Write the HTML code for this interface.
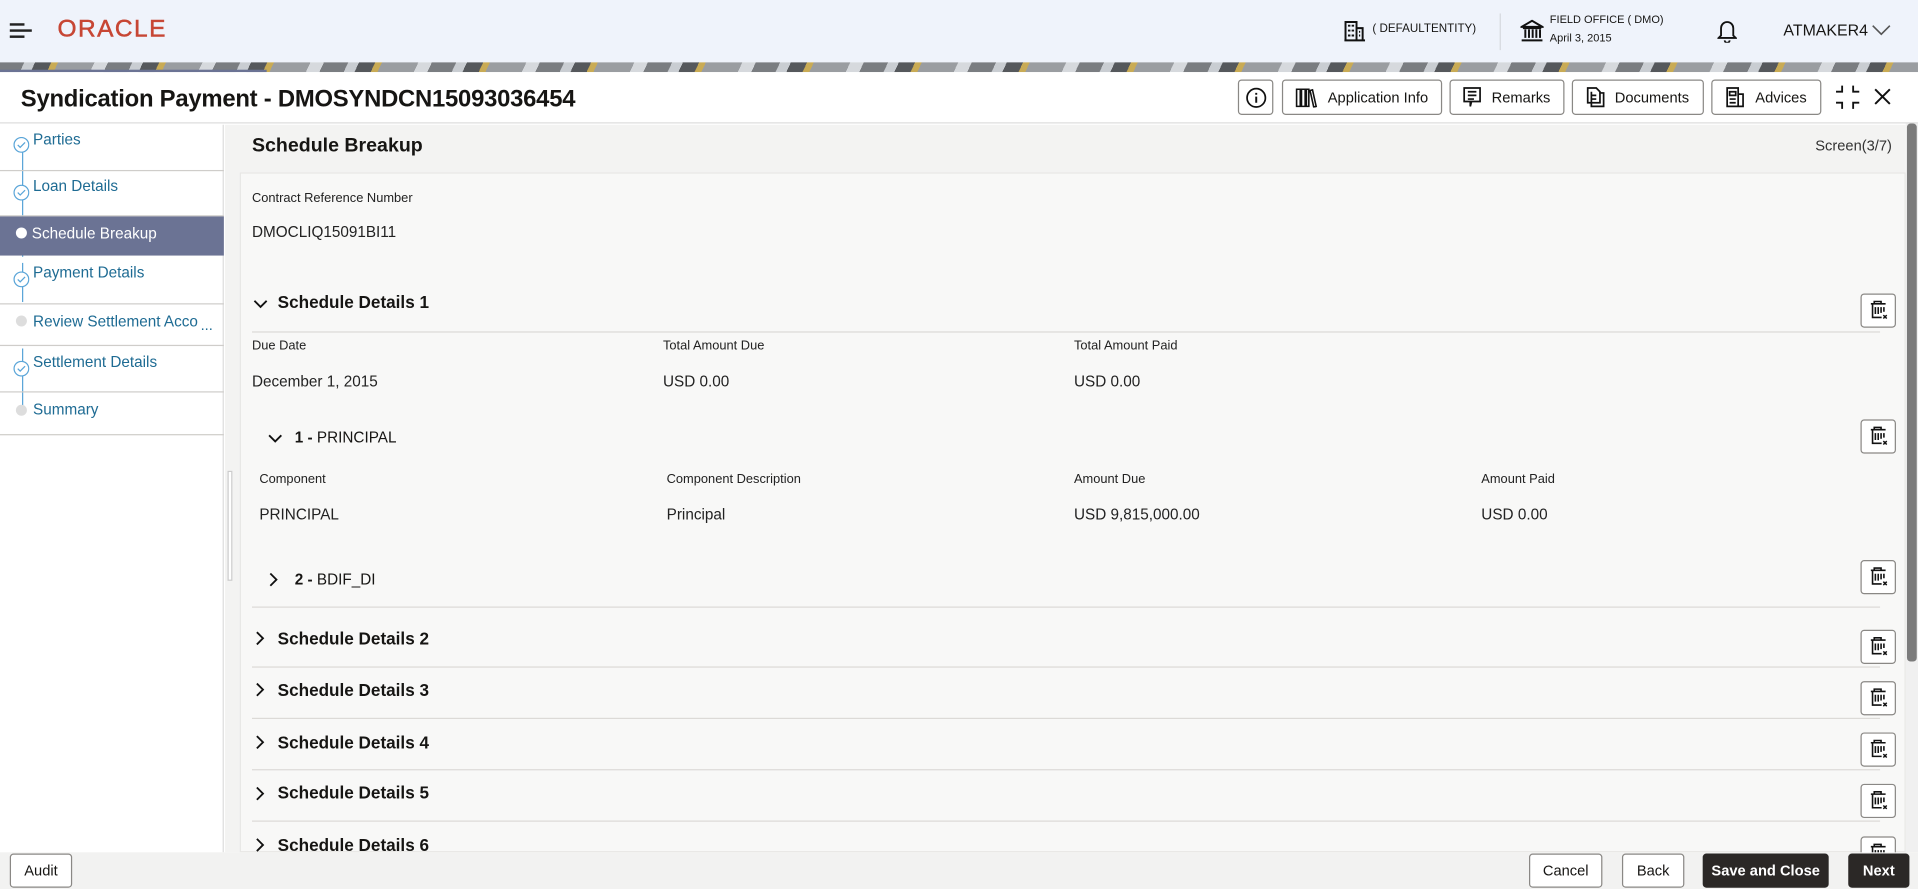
<!DOCTYPE html>
<html><head><meta charset="utf-8"><style>
*{box-sizing:border-box;margin:0;padding:0}
html,body{width:1918px;height:889px;overflow:hidden;background:#fff}
#s{position:absolute;left:0;top:0;width:1568px;height:727px;transform:scale(1.2232,1.2228);transform-origin:0 0;font-family:"Liberation Sans",sans-serif;color:#161513;overflow:hidden}
.a{position:absolute;white-space:nowrap}
.btn{position:absolute;border:1px solid #8a8885;border-radius:3px;background:#fff;font-size:12px;display:flex;align-items:center;justify-content:center;gap:8px}
.tr{position:absolute;left:1521px;width:29px;height:28px;border:1px solid #8a8885;border-radius:3px;background:#fff}
.lab{font-size:10.5px;color:#222}
.val{font-size:12.5px;color:#222}
.hd{font-size:14px;font-weight:bold;color:#161513}
.ln{position:absolute;left:206px;width:1331px;height:1px;background:#dcdad7}
.side{position:absolute;left:0;width:183px;border-bottom:1px solid #cfcdca}
.st{position:absolute;left:27px;font-size:12.5px;color:#1e6b93}
.ck{position:absolute;left:11px;width:13px;height:13px}
.dot{position:absolute;left:13px;width:9px;height:9px;border-radius:50%;background:#ddd}
.vl{position:absolute;left:18px;width:1px;background:#5aa5d8}
</style></head><body><div id="s">
<svg width="0" height="0" style="position:absolute"><defs>
<symbol id="t" viewBox="0 0 29 28"><path d="M11 8V6h6v2M8 8h13M9.5 8v12h8M12 11v6M14.5 11v6M17 11v5M19.5 11v4" stroke="#111" stroke-width="1.4" fill="none"/><path d="M19 18l3 3M22 18l-3 3" stroke="#111" stroke-width="1.3"/></symbol>
<symbol id="c" viewBox="0 0 13 13"><circle cx="6.5" cy="6.5" r="6" fill="#fff" stroke="#5aa5d8" stroke-width="1"/><path d="M3.5 6.5l2 2 4-4" stroke="#5aa5d8" stroke-width="1" fill="none"/></symbol>
</defs></svg>
<!-- top bar -->
<div class="a" style="left:0;top:0;width:1568px;height:51px;background:#eff3fb"></div>
<div class="a" style="left:8px;top:19px;width:12px;height:2px;background:#222"></div>
<div class="a" style="left:8px;top:24px;width:18px;height:2px;background:#222"></div>
<div class="a" style="left:8px;top:29px;width:12px;height:2px;background:#222"></div>
<div class="a" style="left:47px;top:13px;font-size:20px;color:#c74634;letter-spacing:1.2px;-webkit-text-stroke:0.4px #c74634">ORACLE</div>
<svg class="a" style="left:1099px;top:16px" width="17" height="18" viewBox="0 0 17 18"><path d="M1 17V2h9v15M10 7h5v10M0 17h17M3 5h2M6 5h2M3 9h2M6 9h2M3 13h2M6 13h2M12 10h1M12 13h1" stroke="#111" stroke-width="1.6" fill="none"/></svg>
<div class="a" style="left:1122px;top:18px;font-size:9.5px">( DEFAULTENTITY)</div>
<div class="a" style="left:1226px;top:11px;width:1px;height:30px;background:#d6d8de"></div>
<svg class="a" style="left:1243px;top:16px" width="19" height="18" viewBox="0 0 19 18"><path d="M1 6L9.5 1 18 6zM2 7h15M4 8v7M7 8v7M10 8v7M13 8v7M16 8v7M1 17h17" stroke="#111" stroke-width="1.6" fill="none"/></svg>
<div class="a" style="left:1267px;top:11px;font-size:9px">FIELD OFFICE ( DMO)</div>
<div class="a" style="left:1267px;top:26px;font-size:9px">April 3, 2015</div>
<svg class="a" style="left:1404px;top:15px" width="16" height="20" viewBox="0 0 16 20"><path d="M3 14V8a5 5 0 0110 0v6l2 2H1zM6 18a2 2 0 004 0" stroke="#111" stroke-width="1.5" fill="none"/></svg>
<div class="a" style="left:1458px;top:17px;font-size:13px">ATMAKER4</div>
<svg class="a" style="left:1530px;top:20px" width="16" height="10"><path d="M1 1l7 7 7-7" stroke="#555" stroke-width="1.3" fill="none"/></svg>
<!-- banner -->
<div class="a" style="left:0;top:51px;width:1568px;height:8px;background:repeating-linear-gradient(115deg,#7a7d81 0 18px,#c9cdd2 18px 26px,#55585c 26px 38px,#c9ab55 38px 43px,#9a9da1 43px 70px,#d6d9dd 70px 80px)"></div>
<div class="a" style="left:0;top:57px;width:218px;height:2px;background:#6b7394"></div>
<!-- title bar -->
<div class="a" style="left:0;top:59px;width:1568px;height:42px;background:#fff;border-bottom:1px solid #ddd"></div>
<div class="a" style="left:17px;top:70px;font-size:19.5px;font-weight:bold;letter-spacing:-0.2px">Syndication Payment - DMOSYNDCN15093036454</div>
<div class="btn" style="left:1012px;top:65px;width:29px;height:29px"><svg width="18" height="18"><circle cx="9" cy="9" r="7.5" stroke="#111" stroke-width="1.4" fill="none"/><path d="M9 8v5M9 5v1.5" stroke="#111" stroke-width="1.6"/></svg></div>
<div class="btn" style="left:1048px;top:65px;width:131px;height:29px"><svg width="18" height="16"><path d="M1 1h3v14H1zM5 1h3v14H5zM9 1h2v14H9zM12 2l2-.5 3 13.5-2 .5z" stroke="#111" stroke-width="1.3" fill="none"/></svg>Application Info</div>
<div class="btn" style="left:1185px;top:65px;width:94px;height:29px"><svg width="15" height="17"><path d="M1 1h13v11H7l-1 4V12H1zM4 4h7M4 7h7M4 10h5" stroke="#111" stroke-width="1.4" fill="none"/></svg>Remarks</div>
<div class="btn" style="left:1285px;top:65px;width:108px;height:29px"><svg width="15" height="17"><path d="M1 1h7l3 3v9H1zM4 4v9M11 5h3v11H4v-3M4 7h4M4 10h4" stroke="#111" stroke-width="1.4" fill="none"/></svg>Documents</div>
<div class="btn" style="left:1399px;top:65px;width:90px;height:29px"><svg width="16" height="17"><path d="M1 1h9v15H1zM10 6h4v10h-4M3 4h5v3H3zM3 10h5M3 13h5" stroke="#111" stroke-width="1.4" fill="none"/></svg>Advices</div>
<svg class="a" style="left:1500px;top:69px" width="21" height="21"><path d="M6 1v5H1M15 1v5h5M6 20v-5H1M15 20v-5h5" stroke="#111" stroke-width="1.5" fill="none"/></svg>
<svg class="a" style="left:1532px;top:72px" width="14" height="14"><path d="M1 1l12 12M13 1L1 13" stroke="#111" stroke-width="1.6"/></svg>
<!-- sidebar -->
<div class="a" style="left:0;top:102px;width:183px;height:595px;background:#fff;border-right:1px solid #ddd"></div>
<div class="vl" style="top:120px;height:90px"></div>
<div class="vl" style="top:215px;height:32px"></div>
<div class="vl" style="top:285px;height:50px"></div>
<div class="side" style="top:102px;height:38px"></div><svg class="ck" style="top:112px"><use href="#c"/></svg><div class="st" style="top:107px">Parties</div>
<div class="side" style="top:140px;height:37px"></div><svg class="ck" style="top:151px"><use href="#c"/></svg><div class="st" style="top:145px">Loan Details</div>
<div class="a" style="left:0;top:177px;width:183px;height:32px;background:#6b7394"></div><div class="dot" style="top:186px;background:#fff"></div><div class="st" style="top:184px;left:26px;color:#fff">Schedule Breakup</div>
<div class="side" style="top:209px;height:40px"></div><svg class="ck" style="top:222px"><use href="#c"/></svg><div class="st" style="top:216px">Payment Details</div>
<div class="side" style="top:249px;height:34px"></div><div class="dot" style="top:258px"></div><div class="st" style="top:256px">Review Settlement Acco</div><div class="a" style="left:164px;top:259px;font-size:12px;color:#1e6b93">...</div>
<div class="side" style="top:283px;height:38px"></div><svg class="ck" style="top:295px"><use href="#c"/></svg><div class="st" style="top:289px">Settlement Details</div>
<div class="side" style="top:321px;height:35px"></div><div class="dot" style="top:331px"></div><div class="st" style="top:328px">Summary</div>
<!-- main -->
<div class="a" style="left:184px;top:102px;width:1374px;height:595px;background:#f3f3f2"></div>
<div class="a" style="left:186px;top:385px;width:4px;height:90px;border:1px solid #ccc;background:#fff"></div>
<div class="a" style="left:206px;top:111px;font-size:16px;font-weight:bold">Schedule Breakup</div>
<div class="a" style="left:1484px;top:112px;font-size:12px;color:#333">Screen(3/7)</div>
<div class="a" style="left:196px;top:141px;width:1362px;height:556px;background:#f8f8f7;border:1px solid #e8e7e5"></div>
<div class="a lab" style="left:206px;top:156px">Contract Reference Number</div>
<div class="a val" style="left:206px;top:183px">DMOCLIQ15091BI11</div>
<svg class="a" style="left:207px;top:245px" width="12" height="8"><path d="M1 1l5 5 5-5" stroke="#111" stroke-width="1.5" fill="none"/></svg>
<div class="a hd" style="left:227px;top:239px">Schedule Details 1</div>
<div class="ln" style="top:271px"></div>
<div class="a lab" style="left:206px;top:277px">Due Date</div><div class="a lab" style="left:542px;top:277px">Total Amount Due</div><div class="a lab" style="left:878px;top:277px">Total Amount Paid</div>
<div class="a val" style="left:206px;top:305px">December 1, 2015</div><div class="a val" style="left:542px;top:305px">USD 0.00</div><div class="a val" style="left:878px;top:305px">USD 0.00</div>
<svg class="a" style="left:219px;top:355px" width="12" height="8"><path d="M1 1l5 5 5-5" stroke="#111" stroke-width="1.5" fill="none"/></svg>
<div class="a" style="left:241px;top:351px;font-size:12.5px"><b>1 -</b> PRINCIPAL</div>
<div class="a lab" style="left:212px;top:386px">Component</div><div class="a lab" style="left:545px;top:386px">Component Description</div><div class="a lab" style="left:878px;top:386px">Amount Due</div><div class="a lab" style="left:1211px;top:386px">Amount Paid</div>
<div class="a val" style="left:212px;top:414px">PRINCIPAL</div><div class="a val" style="left:545px;top:414px">Principal</div><div class="a val" style="left:878px;top:414px">USD 9,815,000.00</div><div class="a val" style="left:1211px;top:414px">USD 0.00</div>
<svg class="a" style="left:220px;top:468px" width="8" height="12"><path d="M1 1l5 5-5 5" stroke="#111" stroke-width="1.5" fill="none"/></svg>
<div class="a" style="left:241px;top:467px;font-size:12.5px"><b>2 -</b> BDIF_DI</div>
<div class="ln" style="top:496px"></div>
<svg class="a" style="left:209px;top:516px" width="8" height="12"><path d="M1 1l5 5-5 5" stroke="#111" stroke-width="1.5" fill="none"/></svg>
<div class="a hd" style="left:227px;top:514px">Schedule Details 2</div><div class="ln" style="top:545px"></div>
<svg class="a" style="left:209px;top:558px" width="8" height="12"><path d="M1 1l5 5-5 5" stroke="#111" stroke-width="1.5" fill="none"/></svg>
<div class="a hd" style="left:227px;top:556px">Schedule Details 3</div><div class="ln" style="top:587px"></div>
<svg class="a" style="left:209px;top:601px" width="8" height="12"><path d="M1 1l5 5-5 5" stroke="#111" stroke-width="1.5" fill="none"/></svg>
<div class="a hd" style="left:227px;top:599px">Schedule Details 4</div><div class="ln" style="top:629px"></div>
<svg class="a" style="left:209px;top:643px" width="8" height="12"><path d="M1 1l5 5-5 5" stroke="#111" stroke-width="1.5" fill="none"/></svg>
<div class="a hd" style="left:227px;top:640px">Schedule Details 5</div><div class="ln" style="top:671px"></div>
<svg class="a" style="left:209px;top:685px" width="8" height="12"><path d="M1 1l5 5-5 5" stroke="#111" stroke-width="1.5" fill="none"/></svg>
<div class="a hd" style="left:227px;top:683px">Schedule Details 6</div>
<!-- trash buttons -->
<div class="tr" style="top:240px"><svg width="27" height="26"><use href="#t"/></svg></div>
<div class="tr" style="top:343px"><svg width="27" height="26"><use href="#t"/></svg></div>
<div class="tr" style="top:458px"><svg width="27" height="26"><use href="#t"/></svg></div>
<div class="tr" style="top:515px"><svg width="27" height="26"><use href="#t"/></svg></div>
<div class="tr" style="top:557px"><svg width="27" height="26"><use href="#t"/></svg></div>
<div class="tr" style="top:599px"><svg width="27" height="26"><use href="#t"/></svg></div>
<div class="tr" style="top:641px"><svg width="27" height="26"><use href="#t"/></svg></div>
<div class="tr" style="top:684px"><svg width="27" height="26"><use href="#t"/></svg></div>
<!-- scrollbar -->
<div class="a" style="left:1558px;top:101px;width:10px;height:596px;background:#f0f0f0"></div>
<div class="a" style="left:1559px;top:101px;width:8px;height:440px;background:#7b7b7b;border-radius:3px"></div>
<!-- footer -->
<div class="a" style="left:0;top:697px;width:1568px;height:30px;background:#f2f2f1"></div>
<div class="btn" style="left:8px;top:698px;width:51px;height:28px">Audit</div>
<div class="btn" style="left:1250px;top:698px;width:60px;height:28px">Cancel</div>
<div class="btn" style="left:1326px;top:698px;width:51px;height:28px">Back</div>
<div class="btn" style="left:1392px;top:698px;width:103px;height:28px;background:#2b2826;border-color:#2b2826;color:#fff;font-weight:bold">Save and Close</div>
<div class="btn" style="left:1511px;top:698px;width:50px;height:28px;background:#2b2826;border-color:#2b2826;color:#fff;font-weight:bold">Next</div>
</div></body></html>
